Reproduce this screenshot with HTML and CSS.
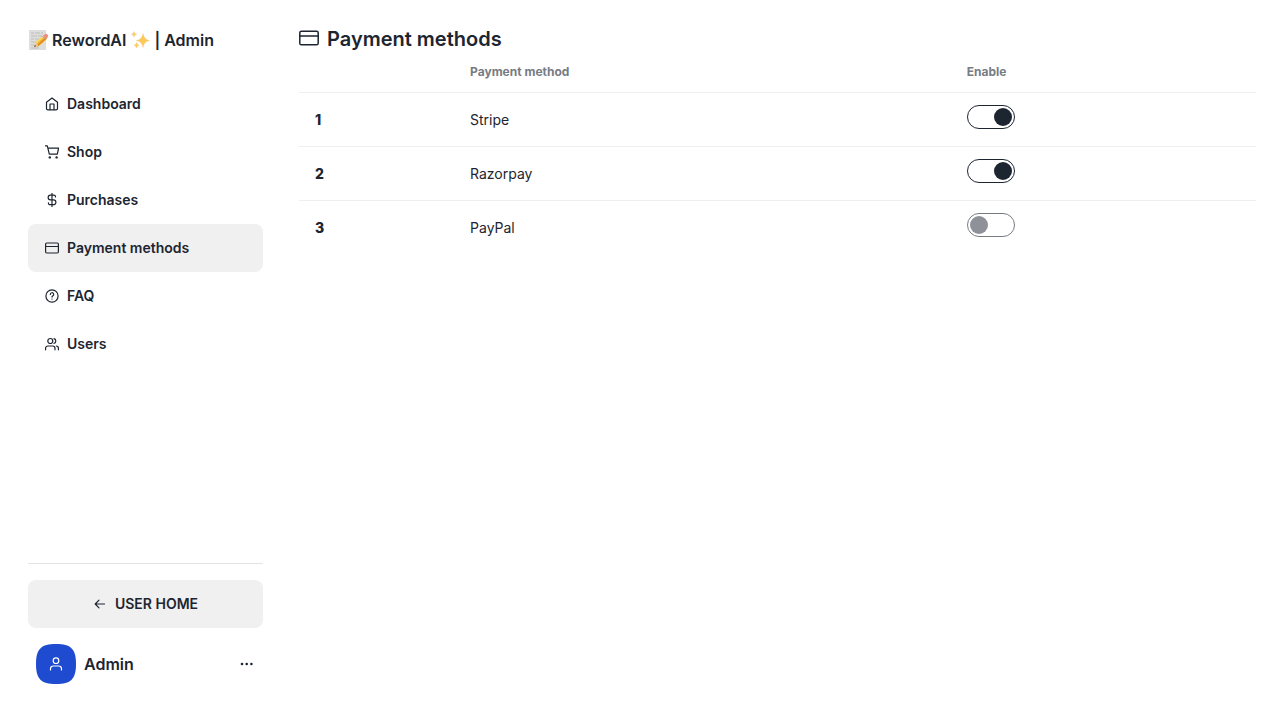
FILE: index.html
```
<!DOCTYPE html>
<html lang="en">
<head>
<meta charset="utf-8">
<meta name="viewport" content="width=device-width, initial-scale=1">
<title>RewordAI Admin</title>
<link rel="stylesheet" href="styles.css">
</head>
<body>
<div class="layout">
  <aside class="sidebar">
    <div class="brand">
      <svg class="emoji" viewBox="0 0 20 20" aria-hidden="true">
        <path d="M1 0h17v20H1z" fill="#dededc"/>
        <path d="M3 3h3m1 0h5m1 0h2M3 6h6m1 0h4M3 9h3m1 0h4M3 12h5M3 15h3M3 18h8" stroke="#bdbdbd" stroke-width="1"/>
        <path d="M6 17l2-5 8-7 3 4-8 7z" fill="#f5b52e"/>
        <path d="M7 14l9-8" stroke="#ffd968" stroke-width="1.3"/>
        <path d="M9 16l9-8" stroke="#d98218" stroke-width="1.2"/>
        <path d="M15 6l2-2c1-1 4 1 3 3l-2 2z" fill="#ee8d83"/>
        <path d="M14.500 6.500l3 3" stroke="#9fa5aa" stroke-width="1"/>
        <path d="M6 17l2-4 2.500 2.500z" fill="#edc79b"/><path d="M6 17l1-2 1 1z" fill="#333"/>
      </svg>
      <span>RewordAI</span>
      <svg class="emoji" viewBox="0 0 20 20" aria-hidden="true">
        <g fill="#fccb55" stroke="#f0b265" stroke-width=".3">
          <path d="M13 3.500q.8 6 6.500 7-5.700 1-6.500 7-.8-6-6.500-7 5.700-1 6.500-7z"/><path d="M4 1.500q.3 2.500 2.600 2.800Q4.300 4.600 4 7.100 3.700 4.600 1.400 4.300 3.700 4 4 1.500z"/><path d="M6.500 12.500q.3 2.500 2.600 2.800-2.300.3-2.600 2.800-.3-2.500-2.600-2.800 2.300-.3 2.600-2.800z"/>
        </g>
      </svg>
      <span>| Admin</span>
    </div>
    <nav class="menu">
      <a class="item" href="#"><svg class="icon" viewBox="0 0 14 14"><path d="M1.500 5.300 7 1l5.500 4.300v6.200a1.300 1.300 0 0 1-1.300 1.300H2.800a1.300 1.300 0 0 1-1.300-1.300zM5 12.800V7h4v5.800"/></svg>Dashboard</a>
      <a class="item" href="#"><svg class="icon" viewBox="0 0 14 14"><path d="M.3 .8h2l2 8.400h8l1.300-6H2.900"/><circle class="dot" cx="4.800" cy="12.400" r="1.200"/><circle class="dot" cx="11.600" cy="12.400" r="1.200"/></svg>Shop</a>
      <a class="item" href="#"><svg class="icon" viewBox="0 0 14 14"><path d="M7 .3v13.400M10.500 4V3.600A1.600 1.600 0 0 0 8.900 2.200H5.500a2.300 2.300 0 0 0 0 4.700h3a2.400 2.400 0 0 1 0 4.800H5a1.600 1.600 0 0 1-1.600-1.600v-.3"/></svg>Purchases</a>
      <a class="item active" href="#" aria-current="page"><svg class="icon" viewBox="0 0 14 14"><rect x=".6" y="2" width="12.800" height="10" rx="1.200"/><path d="M.6 5.500h12.800"/></svg>Payment methods</a>
      <a class="item" href="#"><svg class="icon" viewBox="0 0 14 14"><circle cx="7" cy="7" r="6.100"/><path d="M5.300 5.400a1.700 1.700 0 1 1 2.500 1.500c-.6.300-.8.500-.8 1.200"/><circle class="dot" cx="7" cy="10.100" r=".7"/></svg>FAQ</a>
      <a class="item" href="#"><svg class="icon" viewBox="0 0 14 14"><circle cx="5.300" cy="4" r="2.500"/><path d="M.6 12.800v-1.500a2.300 2.300 0 0 1 2.300-2.300h4.800A2.300 2.300 0 0 1 10 11.300v1.500M9 1.600a2.500 2.500 0 0 1 0 4.800M11.300 9a2.200 2.200 0 0 1 2.100 2.200v1.600"/></svg>Users</a>
    </nav>
    <div class="footer">
      <a class="home" href="#"><svg class="icon" viewBox="0 0 14 14"><path d="M11.500 7H2.200M6 3.200 2.200 7 6 10.800"/></svg>USER HOME</a>
      <div class="profile">
        <svg class="avatar" viewBox="0 0 40 40" aria-hidden="true"><path class="squircle" d="M20 0C5 0 0 5 0 20s5 20 20 20 20-5 20-20S35 0 20 0z"/><circle cx="20" cy="16.700" r="2.800"/><path d="M14.500 26v-1.300a2.700 2.700 0 0 1 2.700-2.700h5.600a2.700 2.700 0 0 1 2.700 2.700V26"/></svg>
        <span class="name">Admin</span>
        <button class="more" type="button" aria-label="Account options"><svg class="icon" viewBox="0 0 14 14"><circle class="dot" cx="2" cy="7" r="1.300"/><circle class="dot" cx="6.700" cy="7" r="1.300"/><circle class="dot" cx="11.400" cy="7" r="1.300"/></svg></button>
      </div>
    </div>
  </aside>
  <main class="main">
    <h1 class="title"><svg class="title-icon" viewBox="0 0 20 20" aria-hidden="true"><rect x=".8" y="2.200" width="18.400" height="13.600" rx="1.600"/><path d="M.8 7h18.400"/></svg>Payment methods</h1>
    <table class="table">
      <colgroup><col class="col-number"><col class="col-method"><col class="col-enable"></colgroup>
      <thead><tr><td></td><th scope="col">Payment method</th><th scope="col">Enable</th></tr></thead>
      <tbody>
        <tr><th scope="row">1</th><td>Stripe</td><td><input class="toggle" type="checkbox" aria-label="Enable Stripe" checked></td></tr>
        <tr><th scope="row">2</th><td>Razorpay</td><td><input class="toggle" type="checkbox" aria-label="Enable Razorpay" checked></td></tr>
        <tr><th scope="row">3</th><td>PayPal</td><td><input class="toggle" type="checkbox" aria-label="Enable PayPal"></td></tr>
      </tbody>
    </table>
  </main>
</div>
</body>
</html>
```
FILE: styles.css
```
* { box-sizing: border-box; }
body { margin: 0; background: #fff; color: #1d2530; font: 14px/20px Inter, "Liberation Sans", sans-serif; }
.layout { display: flex; min-height: 100vh; }
.sidebar { width: 263px; flex: none; padding: 28px 0 28px 28px; display: flex; flex-direction: column; }
.brand { display: flex; align-items: center; gap: 4px; height: 24px; font-size: 16px; font-weight: 600; white-space: nowrap; }
.emoji { width: 20px; height: 20px; flex: none; fill: none; }
.menu { margin-top: 28px; display: flex; flex-direction: column; }
.item, .home { display: flex; align-items: center; gap: 8px; height: 48px; padding: 0 17px; border-radius: 8px; color: inherit; text-decoration: none; font-weight: 600; }
.active, .home { background: #f0f0f0; }
.icon { width: 14px; height: 14px; flex: none; }
.icon, .title-icon { fill: none; stroke: currentColor; stroke-width: 1.2; stroke-linejoin: round; stroke-linecap: round; }
.icon .dot { fill: currentColor; stroke: none; }
.footer { margin-top: auto; padding-top: 16px; border-top: 1px solid #e2e4e7; }
.home { justify-content: center; }
.profile { display: flex; align-items: center; gap: 8px; padding: 16px 8px 8px; }
.avatar { width: 40px; height: 40px; fill: none; stroke: #fff; stroke-width: 1.2; stroke-linecap: round; }
.squircle { fill: #1e4bd0; stroke: none; }
.name { flex: 1; font-size: 16px; font-weight: 600; }
.more { display: flex; padding: 0 1px; border: 0; background: none; color: inherit; }
.main { flex: 1; min-width: 0; padding: 25px 24px 24px 36px; }
.title { display: flex; align-items: center; gap: 8px; margin: 0; font-size: 20px; line-height: 28px; font-weight: 600; }
.title-icon { width: 20px; height: 20px; stroke-width: 1.5; }
.table { width: 100%; table-layout: fixed; border-collapse: collapse; text-align: left; }
.col-number { width: 16.2%; }
.col-method { width: 51.9%; }
.col-enable { width: 31.9%; }
.table th, .table td { padding: 12px 16px; }
.table thead th { padding-top: 11px; font-size: 12px; line-height: 16px; color: #777c83; font-weight: 700; }
.table tbody th { font-weight: 800; }
.table tr { border-bottom: 1px solid #eeeff0; }
.table tbody tr:last-child { border-bottom: 0; }
.toggle { appearance: none; display: flex; width: 48px; height: 24px; margin: 0 0 5px; padding: 2px; border: 1px solid #777c83; border-radius: 12px; color: #8e9197; }
.toggle::before { content: ""; width: 18px; height: 18px; border-radius: 50%; background: currentColor; }
.toggle:checked { justify-content: flex-end; border-color: #1d2530; color: #1d2530; }
```
